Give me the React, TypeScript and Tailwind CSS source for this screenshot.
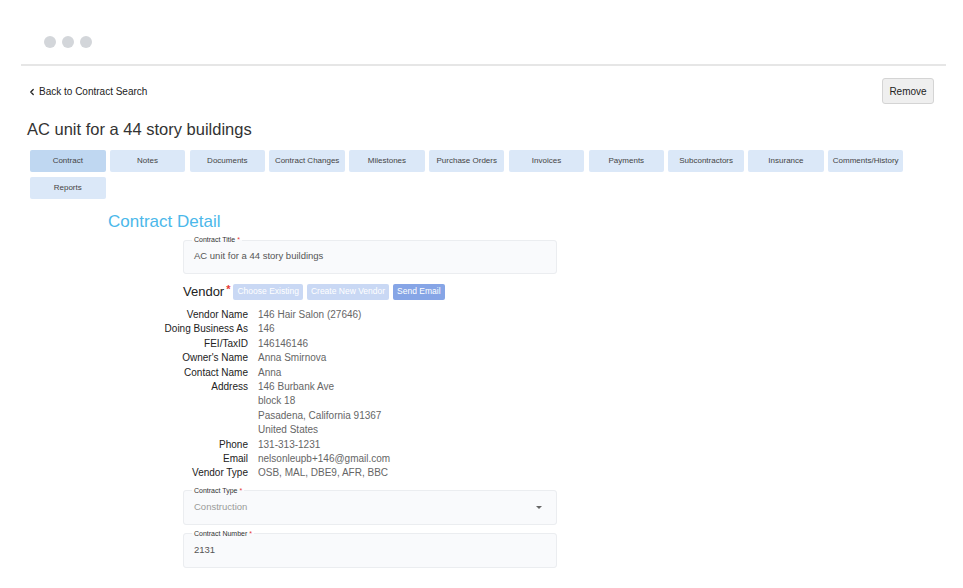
import { ChevronLeft } from 'lucide-react'

const TABS = [
  'Contract',
  'Notes',
  'Documents',
  'Contract Changes',
  'Milestones',
  'Purchase Orders',
  'Invoices',
  'Payments',
  'Subcontractors',
  'Insurance',
  'Comments/History',
  'Reports',
]

const VENDOR_ROWS: [string, string[]][] = [
  ['Vendor Name', ['146 Hair Salon (27646)']],
  ['Doing Business As', ['146']],
  ['FEI/TaxID', ['146146146']],
  ["Owner's Name", ['Anna Smirnova']],
  ['Contact Name', ['Anna']],
  ['Address', ['146 Burbank Ave', 'block 18', 'Pasadena, California 91367', 'United States']],
  ['Phone', ['131-313-1231']],
  ['Email', ['nelsonleupb+146@gmail.com']],
  ['Vendor Type', ['OSB, MAL, DBE9, AFR, BBC']],
]

type FieldProps = {
  label: string
  value: string
  select?: boolean
  muted?: boolean
}

function Field({ label, value, select, muted }: FieldProps) {
  return (
    <fieldset className="h-[38px] w-[374px] rounded-[3px] border border-[#ebedf0] bg-[#f9fafc] px-[10px]">
      <legend className="-ml-[2px] px-[2px] text-[7px] leading-[8px] text-[#333]">
        {label} <span className="text-[#e53935]">*</span>
      </legend>
      <div className="flex h-[25px] items-center justify-between">
        <span className={`text-[9.5px] ${muted ? 'text-[#9a9a9a]' : 'text-[#555]'}`}>{value}</span>
        {select && (
          <span className="mr-[4px] h-0 w-0 border-x-[3.5px] border-t-[3.5px] border-x-transparent border-t-[#666]" />
        )}
      </div>
    </fieldset>
  )
}

export default function App() {
  return (
    <div className="h-[588px] w-[963px] overflow-hidden bg-white font-['Liberation_Sans',Arial,sans-serif] text-[#333]">
      <div className="flex gap-[6px] pl-[44px] pt-[36px]">
        <span className="h-[12px] w-[12px] rounded-full bg-[#d3d6da]" />
        <span className="h-[12px] w-[12px] rounded-full bg-[#d3d6da]" />
        <span className="h-[12px] w-[12px] rounded-full bg-[#d3d6da]" />
      </div>
      <div className="ml-[21px] mr-[17px] mt-[16px] h-[2px] bg-[#e6e6e6]" />

      <div className="flex items-start justify-between pl-[27px] pr-[29px] pt-[12px]">
        <a className="mt-[6px] flex items-center gap-[2px] text-[10px] text-[#222]">
          <ChevronLeft size={10} strokeWidth={3} />
          Back to Contract Search
        </a>
        <button className="h-[26px] w-[52px] rounded-[3px] border border-[#d4d4d4] bg-[#efefef] text-[10px] text-[#222]">
          Remove
        </button>
      </div>

      <h1 className="ml-[27px] mt-[15px] text-[16.5px] leading-[20px] text-[#333]">
        AC unit for a 44 story buildings
      </h1>

      <div className="ml-[30px] mt-[11px] flex w-[880px] flex-wrap gap-x-[4.3px] gap-y-[5px]">
        {TABS.map((tab, i) => (
          <button
            key={tab}
            className={`h-[22px] w-[75.5px] rounded-[2px] text-[8px] text-[#444] ${
              i === 0 ? 'bg-[#bfd7f1]' : 'bg-[#dbe8f8]'
            }`}
          >
            {tab}
          </button>
        ))}
      </div>

      <h2 className="ml-[108px] mt-[13px] text-[17px] font-light leading-[20px] text-[#4bb8ea]">
        Contract Detail
      </h2>

      <div className="ml-[183px] mt-[4px] flex flex-col">
        <Field label="Contract Title" value="AC unit for a 44 story buildings" />

        <div className="mt-[8px] flex h-[19px] items-center">
          <span className="text-[13px] leading-[19px] text-[#222]">Vendor</span>
          <span className="mb-[5px] ml-[2px] text-[11px] font-bold leading-none text-[#e53935]">*</span>
          <div className="ml-[3px] flex gap-[4px]">
            <button className="h-[16px] rounded-[2px] bg-[#c9d8f4] px-[4px] text-[8.5px] text-white">
              Choose Existing
            </button>
            <button className="h-[16px] rounded-[2px] bg-[#c9d8f4] px-[4px] text-[8.5px] text-white">
              Create New Vendor
            </button>
            <button className="h-[16px] rounded-[2px] bg-[#86a5e6] px-[4px] text-[8.5px] text-white">
              Send Email
            </button>
          </div>
        </div>
      </div>

      <div className="ml-[140px] mt-[7px] grid grid-cols-[108px_auto] gap-x-[10px] text-[10px] leading-[14.4px]">
        {VENDOR_ROWS.map(([label, values]) => (
          <div key={label} className="contents">
            <span className="text-right text-[#222]">{label}</span>
            <div className="flex flex-col text-[#666]">
              {values.map((v) => (
                <span key={v}>{v}</span>
              ))}
            </div>
          </div>
        ))}
      </div>

      <div className="ml-[183px] mt-[6px] flex flex-col gap-[5px]">
        <Field label="Contract Type" value="Construction" select muted />
        <Field label="Contract Number" value="2131" />
      </div>
    </div>
  )
}
